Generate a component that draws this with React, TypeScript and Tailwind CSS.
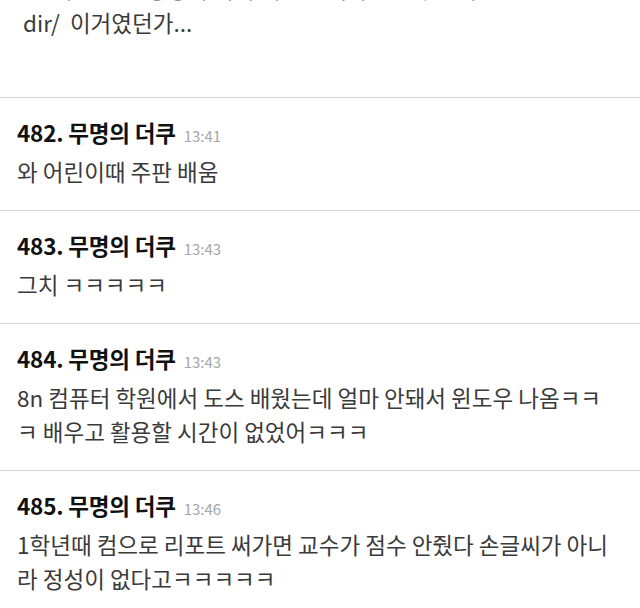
const posts = [
  { no: 482, time: "13:41", lines: ["와 어린이때 주판 배움"] },
  { no: 483, time: "13:43", lines: ["그치 ㅋㅋㅋㅋㅋ"] },
  {
    no: 484,
    time: "13:43",
    lines: [
      "8n 컴퓨터 학원에서 도스 배웠는데 얼마 안돼서 윈도우 나옴ㅋㅋ",
      "ㅋ 배우고 활용할 시간이 없었어ㅋㅋㅋ",
    ],
  },
  {
    no: 485,
    time: "13:46",
    lines: [
      "1학년때 컴으로 리포트 써가면 교수가 점수 안줬다 손글씨가 아니",
      "라 정성이 없다고ㅋㅋㅋㅋㅋ",
    ],
  },
];

function Post({ no, time, lines }: { no: number; time: string; lines: string[] }) {
  return (
    <div className="border-t border-[#d4d4d4] pl-[17px] pr-4 pt-[20px] pb-[22px]">
      <div className="flex h-[28px] items-baseline leading-[28px]">
        <span className="text-[22.5px] font-bold tracking-[-0.2px] text-[#111]">
          {no}. 무명의 더쿠
        </span>
        <span className="ml-[8px] text-[15px] text-[#a6a6a6]">{time}</span>
      </div>
      <div className="mt-[8px] text-[22.5px] leading-[34px] text-[#3a3a3a]">
        {lines.map((l, i) => (
          <div key={i} className="h-[34px] whitespace-nowrap">
            {l}
          </div>
        ))}
      </div>
    </div>
  );
}

export default function App() {
  return (
    <div
      className="w-[640px] h-[608px] overflow-hidden bg-white"
      style={{ fontFamily: '"Noto Sans CJK KR", "Noto Sans", sans-serif' }}
    >
      <div className="-mt-[29px] pl-[23px] pb-[58px] text-[22.5px] leading-[34px] text-[#3a3a3a]">
        <div className="h-[34px] whitespace-nowrap">cd 하고 도스 명령어 쳐서 게임 들어가고 그랬는데</div>
        <div className="h-[34px] whitespace-nowrap">dir/ &nbsp;이거였던가...</div>
      </div>
      {posts.map((p) => (
        <Post key={p.no} {...p} />
      ))}
    </div>
  );
}
